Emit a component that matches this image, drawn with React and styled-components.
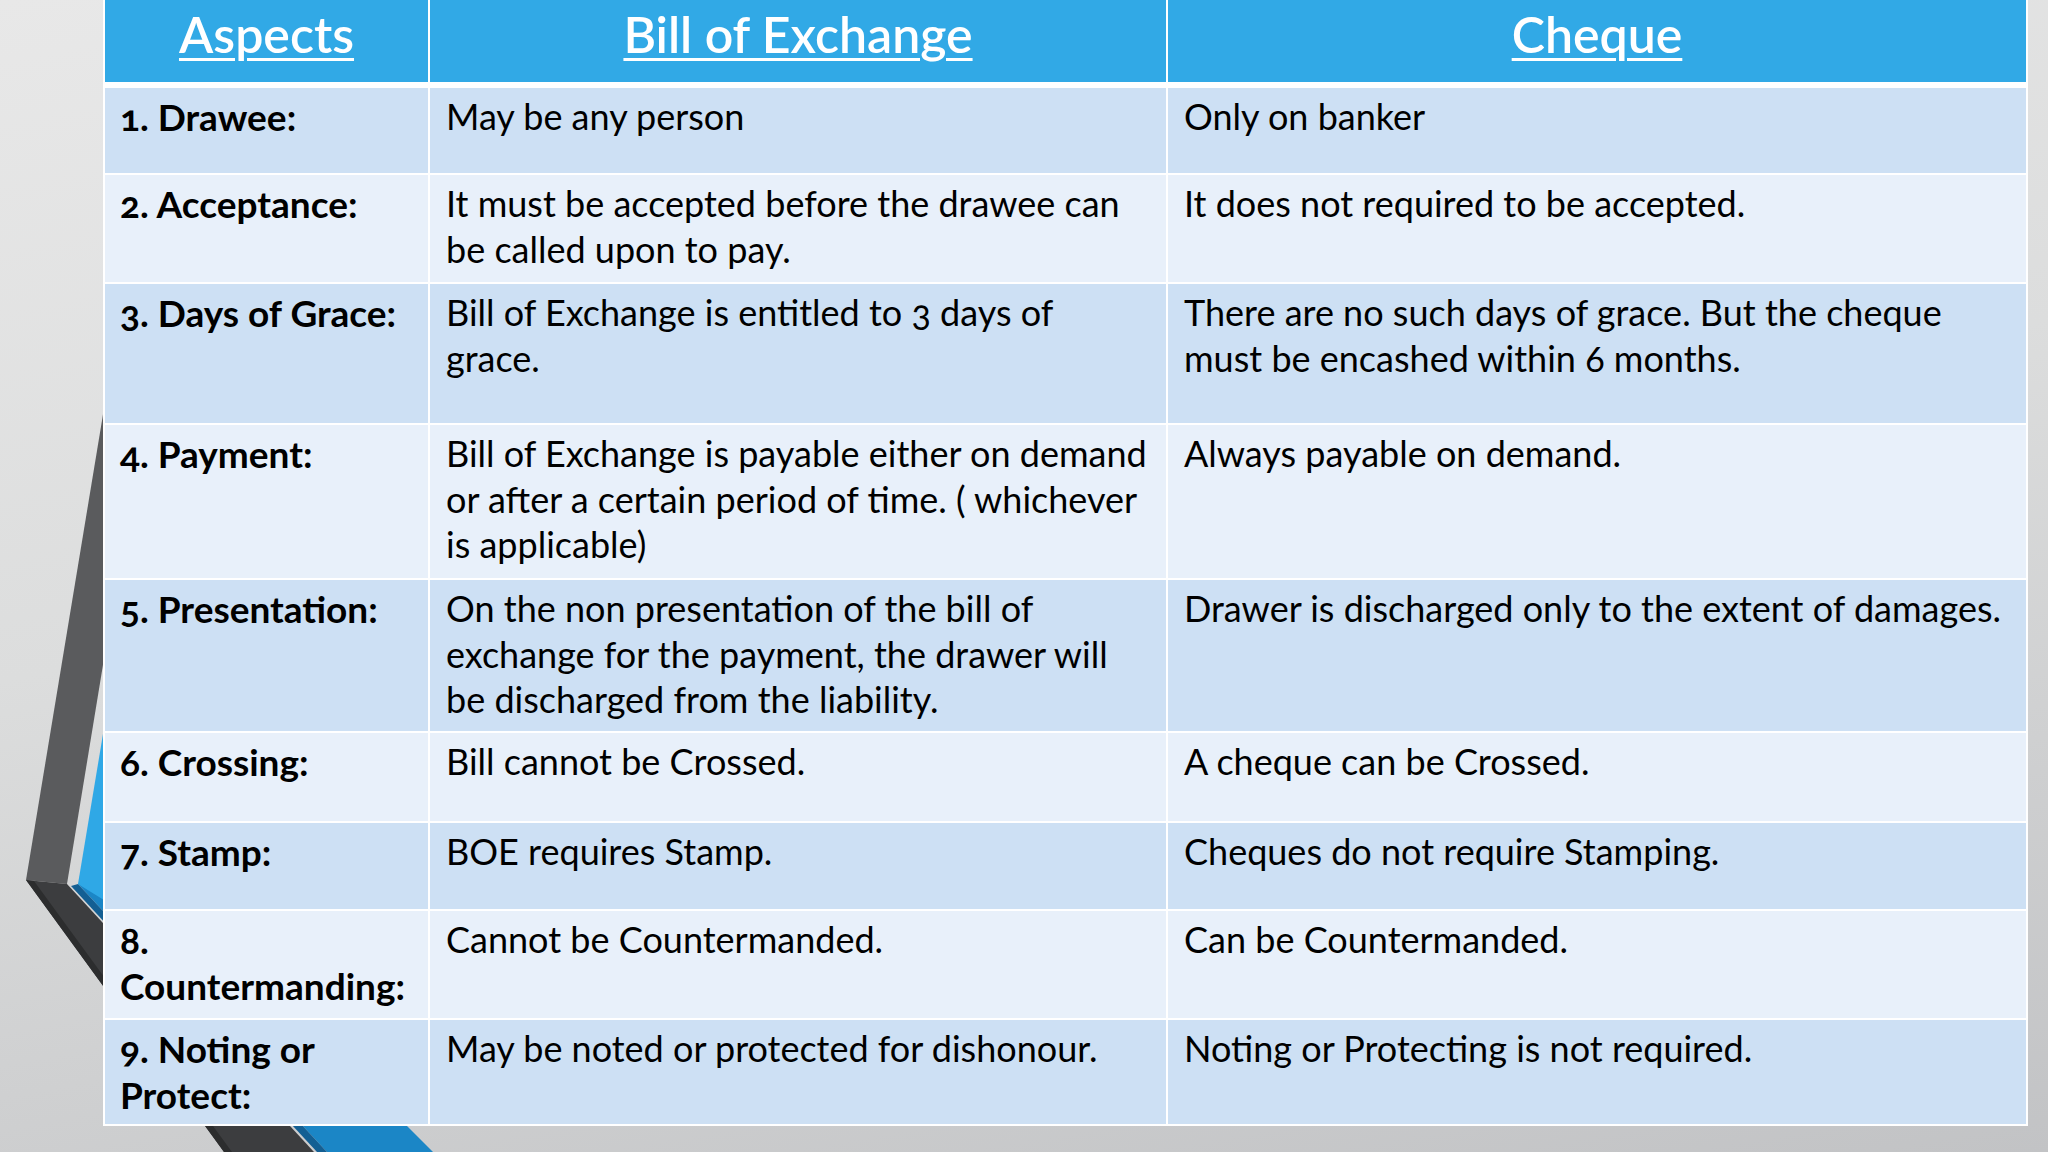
import React from 'react';
import styled, { createGlobalStyle } from 'styled-components';

const GlobalStyle = createGlobalStyle`
  html, body {
    margin: 0;
    padding: 0;
  }
  body {
    width: 2048px;
    height: 1152px;
    overflow: hidden;
    font-family: Lato, "Open Sans", sans-serif;
  }
`;

const COLS = '323px 736px 858px';

const rows = [
  { h: 85, label: '1. Drawee:', bill: 'May be any person', cheque: 'Only on banker' },
  {
    h: 107,
    label: '2. Acceptance:',
    bill: 'It must be accepted before the drawee can\nbe called upon to pay.',
    cheque: 'It does not required to be accepted.'
  },
  {
    h: 139,
    label: '3. Days of Grace:',
    bill: 'Bill of Exchange is entitled to 3 days of\ngrace.',
    cheque: 'There are no such days of grace. But the cheque\nmust be encashed within 6 months.'
  },
  {
    h: 153,
    label: '4. Payment:',
    bill: 'Bill of Exchange is payable either on demand\nor after a certain period of time. ( whichever\nis applicable)',
    cheque: 'Always payable on demand.'
  },
  {
    h: 151,
    label: '5. Presentation:',
    bill: 'On the non presentation of the bill of\nexchange for the payment, the drawer will\nbe discharged from the liability.',
    cheque: 'Drawer is discharged only to the extent of damages.'
  },
  { h: 88, label: '6. Crossing:', bill: 'Bill cannot be Crossed.', cheque: 'A cheque can be Crossed.' },
  { h: 86, label: '7. Stamp:', bill: 'BOE requires Stamp.', cheque: 'Cheques do not require Stamping.' },
  { h: 107, label: '8.\nCountermanding:', bill: 'Cannot be Countermanded.', cheque: 'Can be Countermanded.' },
  {
    h: 104,
    label: '9. Noting or\nProtect:',
    bill: 'May be noted or protected for dishonour.',
    cheque: 'Noting or Protecting is not required.'
  }
];

const Slide = styled.div`
  position: relative;
  width: 2048px;
  height: 1152px;
  overflow: hidden;
  background: linear-gradient(170deg, #e8e8e8 0%, #dcdddd 45%, #c2c3c5 100%);
`;

const Decor = styled.svg`
  position: absolute;
  left: 0;
  top: 0;
  width: 2048px;
  height: 1152px;
`;

const Table = styled.div`
  position: relative;
  margin-left: 103px;
  width: 1925px;
  box-sizing: border-box;
  background: #ffffff;
  padding: 0 2px 2px 2px;
  display: flex;
  flex-direction: column;
  gap: 2px;
`;

const HeaderRow = styled.div`
  display: grid;
  grid-template-columns: ${COLS};
  column-gap: 2px;
  height: 82px;
  margin-bottom: 4px;
`;

const HeadCell = styled.div`
  background: #31a9e6;
  color: #ffffff;
  display: flex;
  justify-content: center;
  padding-top: 3px;
  box-sizing: border-box;
  font-size: 50px;
  font-weight: 600;
  line-height: 62px;
  text-decoration: underline;
  text-decoration-thickness: 3px;
  text-underline-offset: 5px;
`;

const Row = styled.div`
  display: grid;
  grid-template-columns: ${COLS};
  column-gap: 2px;
  height: ${p => p.$h}px;
`;

const Cell = styled.div`
  background: ${p => (p.$shade ? '#cde0f4' : '#e8f0fa')};
  color: #000000;
  padding: ${p => (p.$bold ? '6px 12px 0 15px' : '6px 16px 0 16px')};
  box-sizing: border-box;
  font-size: ${p => (p.$bold ? '37px' : '36px')};
  line-height: 45.7px;
  font-weight: ${p => (p.$bold ? 700 : 400)};
  font-variant-numeric: oldstyle-nums;
  white-space: pre;
  overflow: hidden;
`;

function Backdrop() {
  return (
    <Decor viewBox="0 0 2048 1152">
      <polygon points="112,360 26,880 67,884 112,610" fill="#5a5b5d" />
      <polygon points="26,880 67,884 314,1152 224,1152" fill="#3c3d3f" />
      <polygon points="26,880 34,881 232,1152 224,1152" fill="#2c2d2e" />
      <polygon points="78,884 140,859 433,1152 327,1152" fill="#1b86c6" />
      <polygon points="71,886 78,884 327,1152 317,1152" fill="#135f93" />
      <polygon points="112,680 78,884 112,905" fill="#2fa8e6" />
    </Decor>
  );
}

export default function App() {
  return (
    <>
      <GlobalStyle />
      <Slide>
        <Backdrop />
        <Table>
          <HeaderRow>
            <HeadCell>Aspects</HeadCell>
            <HeadCell>Bill of Exchange</HeadCell>
            <HeadCell>Cheque</HeadCell>
          </HeaderRow>
          {rows.map((r, i) => (
            <Row key={r.label} $h={r.h}>
              <Cell $shade={i % 2 === 0} $bold>
                {r.label}
              </Cell>
              <Cell $shade={i % 2 === 0}>{r.bill}</Cell>
              <Cell $shade={i % 2 === 0}>{r.cheque}</Cell>
            </Row>
          ))}
        </Table>
      </Slide>
    </>
  );
}
